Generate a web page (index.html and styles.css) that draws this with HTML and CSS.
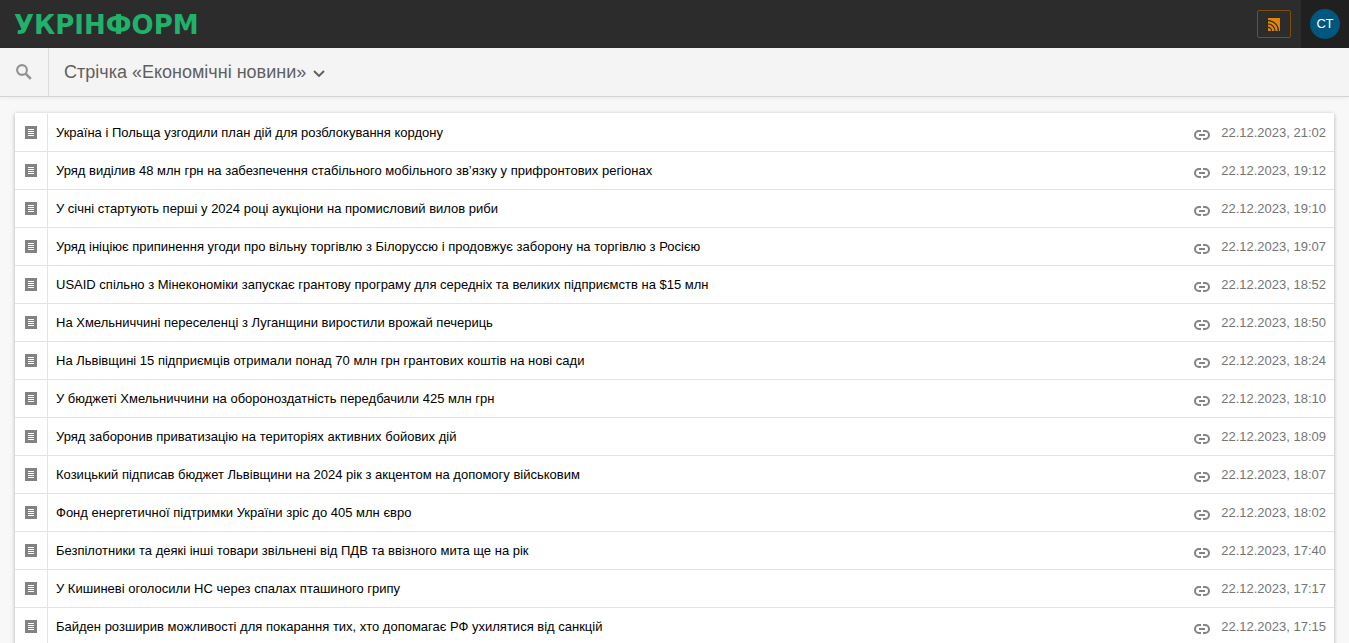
FILE: index.html
```html
<!DOCTYPE html>
<html lang="uk">
<head>
<meta charset="utf-8">
<meta name="viewport" content="width=device-width, initial-scale=1">
<title>Укрінформ — Економічні новини</title>
<link rel="stylesheet" href="styles.css">
</head>
<body>
<svg class="sprite" aria-hidden="true">
  <symbol id="doc" viewBox="0 0 12 13"><path fill="currentColor" fill-rule="evenodd" d="M0 0h12v13H0zM3 3v1h6V3zm0 2v1h6V5zm0 2v1h6V7zm0 2v1h6V9z"/></symbol>
  <symbol id="link" viewBox="0 0 16 10"><path fill="none" stroke="currentColor" stroke-width="2" d="M7 1H5a4 4 0 0 0 0 8h2M9 1h2a4 4 0 0 1 0 8H9M5 5h6"/></symbol>
</svg>
<header class="topbar">
  <a class="logo" href="#">УКРІНФОРМ</a>
  <button class="rss" type="button" aria-label="RSS">
    <svg viewBox="0 0 12 13" aria-hidden="true"><path fill="#e18500" d="M0 0h12v13H0z"/><g fill="none" stroke="#2c2c2c" stroke-width="1.200"><path d="M0 2.600A10.400 10.400 0 0 1 10.400 13"/><path d="M0 6A7 7 0 0 1 7 13"/><path d="M0 9.400A3.600 3.600 0 0 1 3.600 13"/></g></svg>
  </button>
  <div class="account"><button class="avatar" type="button">СТ</button></div>
</header>
<div class="toolbar">
  <button class="search" type="button" aria-label="Пошук">
    <svg viewBox="0 0 16 16" aria-hidden="true" fill="none" stroke="currentColor"><circle cx="6" cy="6" r="4.900" stroke-width="2.100"/><path d="M9.600 9.600l5.200 5.200" stroke-width="2.600"/></svg>
  </button>
  <button class="feed" type="button">Стрічка «Економічні новини»
    <svg viewBox="0 0 12 8" aria-hidden="true"><path d="M1 1l5 5 5-5" fill="none" stroke="currentColor" stroke-width="1.900"/></svg>
  </button>
</div>
<main class="page">
  <ul class="list" id="list"></ul>
</main>
<script src="app.js"></script>
</body>
</html>
```
FILE: styles.css
```css
* { box-sizing: border-box; }
body {
  margin: 0;
  height: 100vh;
  overflow: hidden;
  background: #f8f8f8;
  color: #000;
  font: 13px/16px "Liberation Sans", Arial, sans-serif;
}
button {
  margin: 0;
  padding: 0;
  border: 0;
  background: none;
  font: inherit;
  color: inherit;
  cursor: pointer;
}
a { color: inherit; text-decoration: none; }
svg { display: block; }
.sprite { display: none; }
.topbar {
  display: flex;
  align-items: center;
  height: 48px;
  background: #2c2c2c;
}
.logo {
  margin-left: 14px;
  margin-right: auto;
  padding-top: 2px;
  color: #20b26b;
  font: bold 26px/28px "DejaVu Sans", sans-serif;
}
.rss {
  display: flex;
  align-items: center;
  justify-content: center;
  width: 34px;
  height: 28px;
  margin-right: 10px;
  border: 1px solid #7d4e0c;
  border-radius: 2px;
}
.rss svg { width: 12px; height: 13px; }
.account {
  display: flex;
  align-items: center;
  align-self: stretch;
  padding: 0 9px;
  background: #202020;
}
.avatar {
  width: 30px;
  height: 30px;
  border-radius: 50%;
  background: #00587f;
  color: #fff;
}
.toolbar {
  display: flex;
  height: 49px;
  background: #f4f4f4;
  border-bottom: 1px solid #d3d3d3;
  box-shadow: 0 1px 4px rgba(0, 0, 0, .06);
}
.search {
  display: flex;
  align-items: center;
  width: 49px;
  padding-left: 16px;
  border-right: 1px solid #dcdcdc;
  color: #929292;
}
.search svg { width: 16px; height: 16px; }
.feed {
  display: flex;
  align-items: center;
  gap: 7px;
  padding-left: 15px;
  color: #5f5f5f;
  font-size: 18px;
}
.feed svg { width: 12px; height: 8px; margin-top: 4px; }
.page { padding: 16px 15px; }
.list {
  margin: 0;
  padding: 1px 0 0;
  list-style: none;
  background: #fff;
  box-shadow: 0 1px 4px rgba(0, 0, 0, .3);
}
.row {
  display: flex;
  align-items: center;
  height: 38px;
  border-bottom: 1px solid #e3e3e3;
}
.kind {
  display: flex;
  align-items: center;
  align-self: stretch;
  width: 33px;
  padding-left: 10px;
  border-right: 1px solid #e3e3e3;
  color: #828282;
}
.kind svg { width: 12px; height: 13px; }
.headline { flex: 1; padding-left: 8px; }
.share { margin-right: 11px; padding-top: 5px; color: #848484; }
.share svg { width: 16px; height: 10px; }
.date { padding-right: 8px; color: #757575; }
```
FILE: app.js
```js
const items = [
  ["Україна і Польща узгодили план дій для розблокування кордону", "21:02"],
  ["Уряд виділив 48 млн грн на забезпечення стабільного мобільного зв’язку у прифронтових регіонах", "19:12"],
  ["У січні стартують перші у 2024 році аукціони на промисловий вилов риби", "19:10"],
  ["Уряд ініціює припинення угоди про вільну торгівлю з Білоруссю і продовжує заборону на торгівлю з Росією", "19:07"],
  ["USAID спільно з Мінекономіки запускає грантову програму для середніх та великих підприємств на $15 млн", "18:52"],
  ["На Хмельниччині переселенці з Луганщини виростили врожай печериць", "18:50"],
  ["На Львівщині 15 підприємців отримали понад 70 млн грн грантових коштів на нові сади", "18:24"],
  ["У бюджеті Хмельниччини на обороноздатність передбачили 425 млн грн", "18:10"],
  ["Уряд заборонив приватизацію на територіях активних бойових дій", "18:09"],
  ["Козицький підписав бюджет Львівщини на 2024 рік з акцентом на допомогу військовим", "18:07"],
  ["Фонд енергетичної підтримки України зріс до 405 млн євро", "18:02"],
  ["Безпілотники та деякі інші товари звільнені від ПДВ та ввізного мита ще на рік", "17:40"],
  ["У Кишиневі оголосили НС через спалах пташиного грипу", "17:17"],
  ["Байден розширив можливості для покарання тих, хто допомагає РФ ухилятися від санкцій", "17:15"]
];
document.getElementById("list").innerHTML = items.map(([title, time]) => `
  <li class="row">
    <span class="kind"><svg aria-hidden="true"><use href="#doc"/></svg></span>
    <a class="headline" href="#">${title}</a>
    <button class="share" type="button" aria-label="Посилання"><svg aria-hidden="true"><use href="#link"/></svg></button>
    <time class="date">22.12.2023, ${time}</time>
  </li>`).join("");
```
